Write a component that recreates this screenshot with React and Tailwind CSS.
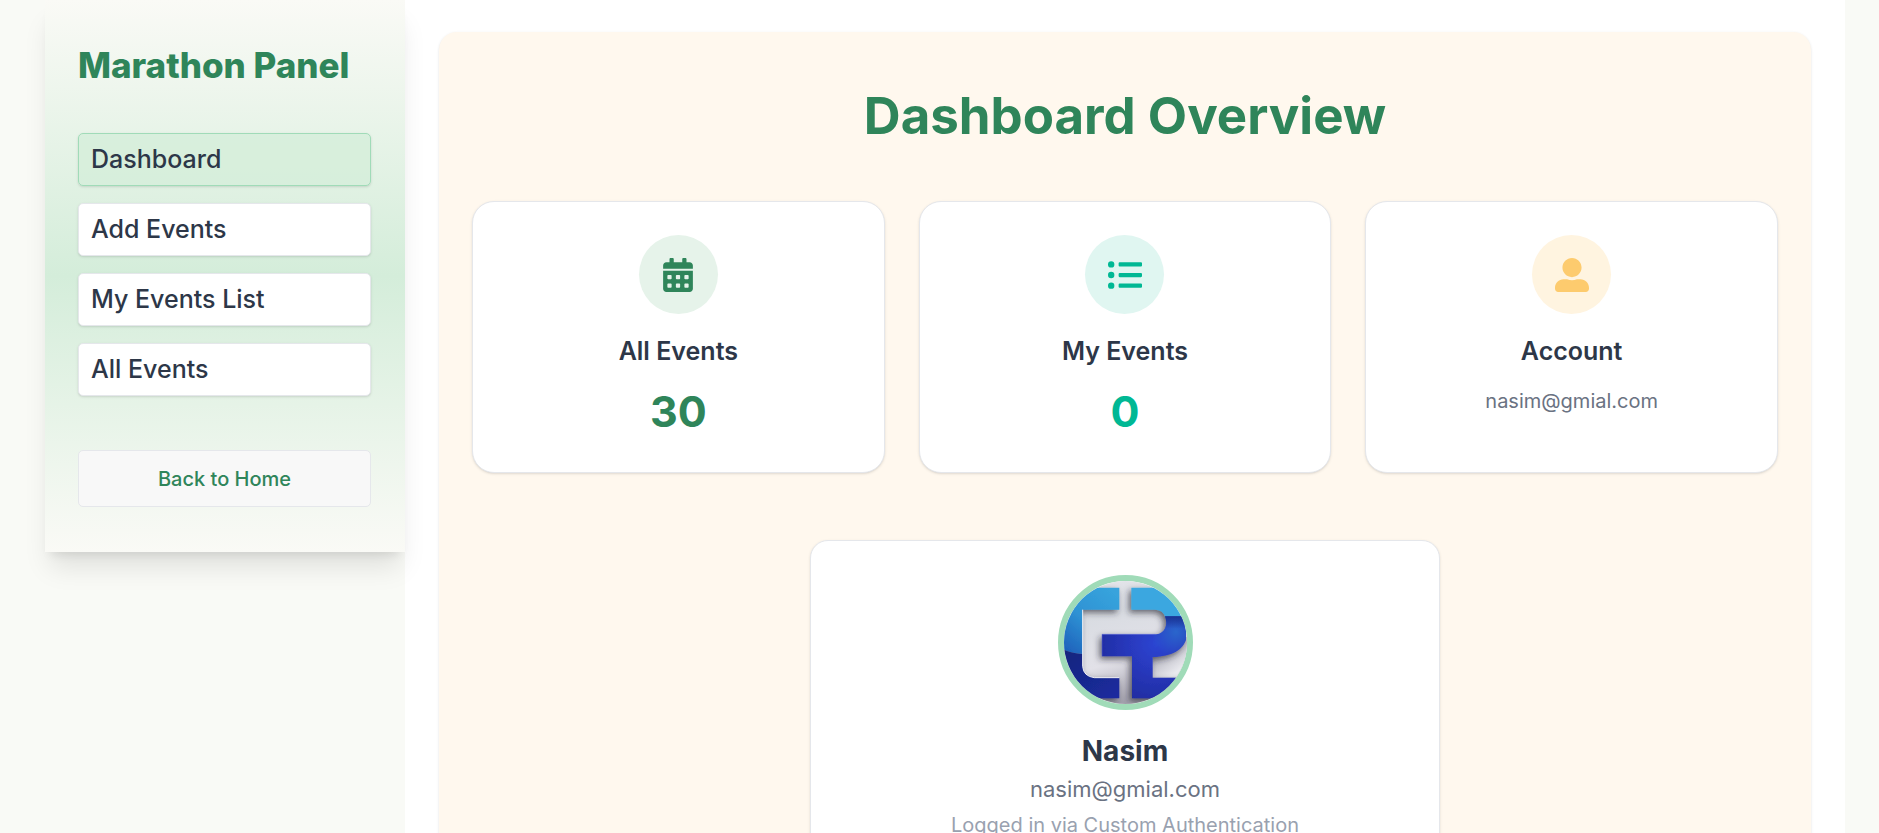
import { FaCalendarAlt, FaListUl, FaUserAlt } from "react-icons/fa";

const navItems = [
  { label: "Dashboard", active: true },
  { label: "Add Events" },
  { label: "My Events List" },
  { label: "All Events" },
];

function Sidebar() {
  return (
    <aside className="relative z-10 w-[360px] shrink-0 bg-linear-to-b from-[#fafaf6] via-[#d4edda] to-[#fafaf6] pt-[43px] pr-[34px] pb-[45px] pl-[33px] shadow-xl">
      <h2 className="text-[35px] leading-[44px] font-extrabold text-[#2f855a]">Marathon Panel</h2>
      <nav className="mt-[46px] flex flex-col gap-[17px]">
        {navItems.map((item) => (
          <a
            key={item.label}
            href="#"
            className={
              item.active
                ? "flex h-[53px] items-center rounded-[5px] border border-[#a0dbb8] bg-[#d4edda]/80 px-3 text-[25px] font-medium text-[#2d3748] shadow-sm"
                : "flex h-[53px] items-center rounded-[5px] border border-gray-200 bg-white px-3 text-[25px] font-medium text-[#2d3748] shadow-sm"
            }
          >
            {item.label}
          </a>
        ))}
      </nav>
      <a
        href="#"
        className="mt-[54px] flex h-[57px] items-center justify-center rounded-[5px] border border-gray-200 bg-[#f8f8f8] text-[20px] font-medium text-[#2f855a]"
      >
        Back to Home
      </a>
    </aside>
  );
}

function StatCard({ icon, tint, title, children }) {
  return (
    <section className="flex h-[272px] flex-col items-center rounded-[22px] border border-gray-200 bg-white pt-[33px] shadow-sm">
      <div className={`flex size-[79px] items-center justify-center rounded-full text-[34px] ${tint}`}>{icon}</div>
      <h2 className="mt-[19px] text-[25px] leading-[36px] font-semibold text-[#2d3748]">{title}</h2>
      {children}
    </section>
  );
}

function Avatar() {
  return (
    <div className="size-[135px] overflow-hidden rounded-full border-6 border-[#a0dbb8]">
      <svg viewBox="69 62 369 369" className="block size-full" role="img" aria-label="Nasim">
        <defs>
          <linearGradient id="plate" x1="0" y1="0" x2="0.3" y2="1">
            <stop offset="0" stopColor="#e9e9ee" />
            <stop offset="0.35" stopColor="#d9dce2" />
            <stop offset="0.7" stopColor="#e2e1e8" />
            <stop offset="1" stopColor="#a3a1ad" />
          </linearGradient>
          <linearGradient id="sky" x1="0.8" y1="0" x2="0.1" y2="1">
            <stop offset="0" stopColor="#37a3dc" />
            <stop offset="0.5" stopColor="#2e92d4" />
            <stop offset="1" stopColor="#1d5fba" />
          </linearGradient>
          <linearGradient id="navy" x1="0" y1="0" x2="1" y2="1">
            <stop offset="0" stopColor="#14247c" />
            <stop offset="1" stopColor="#1c2ca0" />
          </linearGradient>
          <radialGradient id="royal" gradientUnits="userSpaceOnUse" cx="345" cy="250" r="190">
            <stop offset="0" stopColor="#2c45d2" />
            <stop offset="0.45" stopColor="#2838bc" />
            <stop offset="1" stopColor="#1e2b9e" />
          </radialGradient>
          <radialGradient id="bowl" gradientUnits="userSpaceOnUse" cx="405" cy="215" r="75">
            <stop offset="0" stopColor="#2a66cc" />
            <stop offset="1" stopColor="#2a66cc" stopOpacity="0" />
          </radialGradient>
          <linearGradient id="fold" gradientUnits="userSpaceOnUse" x1="0" y1="168" x2="0" y2="205">
            <stop offset="0" stopColor="#152f86" stopOpacity="0.8" />
            <stop offset="1" stopColor="#152f86" stopOpacity="0" />
          </linearGradient>
          <linearGradient id="corner" gradientUnits="userSpaceOnUse" x1="340" y1="290" x2="385" y2="350">
            <stop offset="0" stopColor="#b5b5c0" />
            <stop offset="1" stopColor="#e9e9ee" />
          </linearGradient>
          <filter id="cast" x="-20%" y="-20%" width="140%" height="140%">
            <feDropShadow dx="-7" dy="9" stdDeviation="10" floodColor="#27272f" floodOpacity="0.65" />
          </filter>
        </defs>
        <rect x="60" y="55" width="390" height="390" fill="url(#plate)" />
        <g filter="url(#cast)">
          <path d="M145 82H235V148H125V281Q92 279 60 265V140Q95 95 145 82Z" fill="url(#sky)" />
          <path d="M60 265Q92 279 125 281V318Q127 348 160 352H235V414H150Q80 370 60 310Z" fill="url(#navy)" />
        </g>
        <path d="M125 148V318Q127 348 160 352H235" fill="none" stroke="#f1f1f5" strokeWidth="3" />
        <path d="M335 230H450V352H335Z" fill="url(#corner)" />
        <g filter="url(#cast)">
          <path d="M271 82H350Q405 108 425 170H373Q365 148 342 148H271Z" fill="#3ba7e0" />
          <path
            d="M372 168H424Q438 200 435 238C425 268 394 288 335 290V352H425V414H273V288H183V222H346C372 220 382 194 372 168Z"
            fill="url(#royal)"
          />
        </g>
        <path d="M372 168H424Q438 200 435 238C425 268 394 288 335 290V222H346C372 220 382 194 372 168Z" fill="url(#bowl)" />
        <path d="M372 168H424Q434 188 435 208H374Q379 186 372 168Z" fill="url(#fold)" />
        <path d="M183 222V288M183 222H346" fill="none" stroke="#5c6cdc" strokeWidth="1.5" />
      </svg>
    </div>
  );
}

export default function App() {
  return (
    <div className="min-h-screen bg-[#f9faf6] pr-[34px] pl-[45px] font-['Inter',sans-serif]">
      <div className="flex items-start">
        <Sidebar />
        <main className="min-h-screen min-w-0 flex-1 bg-white px-[34px] py-8">
          <div className="rounded-[18px] bg-[#fff8ee] px-[33px] pt-[50px] pb-[60px] shadow-sm">
            <h1 className="text-center text-[51px] leading-[68px] font-bold text-[#2f855a]">Dashboard Overview</h1>
            <div className="mt-[51px] grid grid-cols-3 gap-[34px]">
              <StatCard icon={<FaCalendarAlt />} tint="bg-[#e6f3ea] text-[#2f855a]" title="All Events">
                <p className="mt-[17px] text-[43px] leading-[50px] font-bold text-[#2f855a]">30</p>
              </StatCard>
              <StatCard icon={<FaListUl />} tint="bg-[#e0f6f1] text-[#00b894]" title="My Events">
                <p className="mt-[17px] text-[43px] leading-[50px] font-bold text-[#00b894]">0</p>
              </StatCard>
              <StatCard icon={<FaUserAlt />} tint="bg-[#fff4e0] text-[#fdcb6e]" title="Account">
                <p className="mt-[17px] text-[20px] leading-[30px] text-gray-500">nasim@gmial.com</p>
              </StatCard>
            </div>
            <section className="mx-auto mt-[67px] flex max-w-[630px] flex-col items-center rounded-[18px] border border-gray-200 bg-white px-[34px] pt-[34px] pb-[34px] shadow-sm">
              <Avatar />
              <h2 className="mt-[21px] text-[28px] leading-[40px] font-bold text-[#2d3748]">Nasim</h2>
              <p className="mt-px text-[22px] leading-[34px] text-gray-500">nasim@gmial.com</p>
              <p className="mt-[5px] text-[20px] leading-[28px] text-gray-400">Logged in via Custom Authentication</p>
            </section>
          </div>
        </main>
      </div>
    </div>
  );
}
